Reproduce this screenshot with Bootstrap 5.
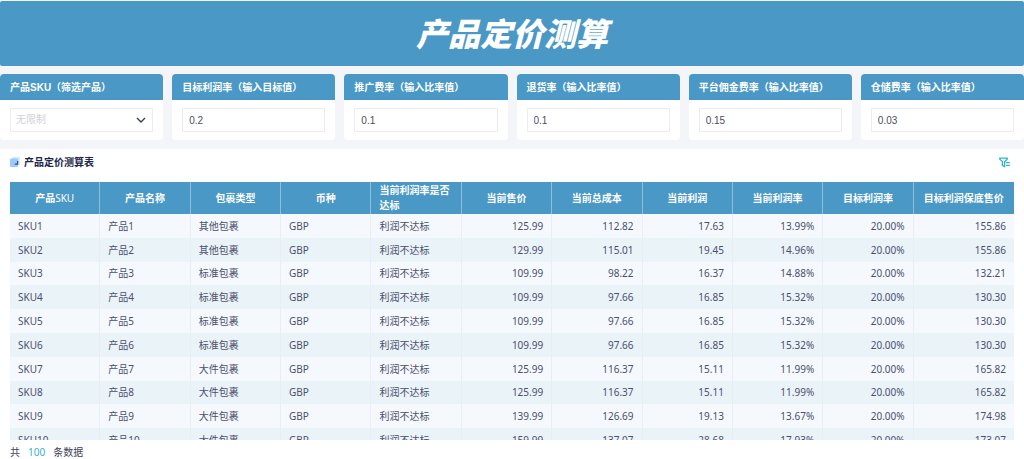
<!DOCTYPE html>
<html lang="zh-CN">
<head>
<meta charset="utf-8">
<meta name="viewport" content="width=device-width, initial-scale=1">
<title>产品定价测算</title>
<link href="https://cdn.jsdelivr.net/npm/bootstrap@5.3.0/dist/css/bootstrap.min.css" rel="stylesheet">
<style>
:root { --brand: #4a98c5; --ink: #4b4f6d; }
body { background: #f3f5f9; font-family: "Noto Sans", "Noto Sans CJK SC", sans-serif; font-size: 10px; line-height: 16px; color: var(--ink); }
.page-title { background: var(--brand); height: 65px; margin-top: 1px; padding-bottom: 4px; border-radius: 2px; }
.page-title h1 { font: italic 900 32px/40px "Noto Sans CJK SC", sans-serif; color: #fff; }
.filters { gap: 9px; padding: 8px 0 9px; }
.filter-card { flex: 1 1 0; min-width: 0; background: #fff; border-radius: 4px; overflow: hidden; font-family: "Liberation Sans", "Noto Sans CJK SC", sans-serif; }
.filter-card label { display: block; background: var(--brand); color: #fff; font-weight: 700; line-height: 24px; padding: 2px 10px 0; white-space: nowrap; }
.filter-body { padding: 8px 10px; }
.filter-body .form-control, .filter-body .form-select { height: 24px; min-height: 0; padding: 0 6px; font-size: 10px; line-height: 22px; border: 1px solid #ececef; border-radius: 1px; color: #4b4d5c; background-color: #fff; }
.filter-body .form-select { padding-left: 5px; color: #d0d1d6; background-image: url("data:image/svg+xml,%3Csvg xmlns='http://www.w3.org/2000/svg' viewBox='0 0 10 10'%3E%3Cpath d='M1 3l4 4 4-4' fill='none' stroke='%23374057' stroke-width='1.4'/%3E%3C/svg%3E"); background-size: 10px 10px; background-position: right 6px center; }
.report { min-height: 0; padding: 0 10px; }
.report-head { height: 33px; padding: 0 4px 7px 0; }
.report-head h2 { font-size: 10px; line-height: 16px; font-weight: 700; color: #20264a; }
.filter-btn { width: 12px; height: 12px; line-height: 0; }
.table-area { min-height: 0; overflow: hidden; }
.price-table { table-layout: fixed; height: 270px; border-collapse: separate; border-spacing: 0; }
.price-table .w-std { width: 9%; }
.price-table th, .price-table td { padding: 0 8px; vertical-align: middle; }
.price-table th { height: 32px; background: var(--brand); color: #fff; font-weight: 700; text-align: center; border-right: 1px solid #8dbfdb; line-height: 15px; }
.price-table th:last-child { white-space: nowrap; border-right: 0; }
.price-table td { border-right: 1px solid #e8eff4; white-space: nowrap; line-height: 20px; }
.price-table td:nth-child(n+6) { text-align: right; }
.price-table td:last-child { border-right: 0; }
.price-table tbody tr:nth-child(odd) { background: #f5f9fd; }
.price-table tbody tr:nth-child(even) { background: #eaf3f8; }
.report-foot { height: 19px; line-height: 24px; gap: 8px; color: #40435a; }
.total { color: #36b3c8; }
</style>
</head>
<body class="vh-100 d-flex flex-column overflow-hidden">
<header class="page-title flex-shrink-0 d-flex align-items-center justify-content-center"><h1 class="m-0">产品定价测算</h1></header>
<form class="filters d-flex flex-shrink-0">
  <div class="filter-card"><label for="sku">产品SKU（筛选产品）</label><div class="filter-body"><select class="form-select" id="sku"><option>无限制</option></select></div></div>
  <div class="filter-card"><label for="target">目标利润率（输入目标值）</label><div class="filter-body"><input class="form-control" id="target" value="0.2"></div></div>
  <div class="filter-card"><label for="promo">推广费率（输入比率值）</label><div class="filter-body"><input class="form-control" id="promo" value="0.1"></div></div>
  <div class="filter-card"><label for="returns">退货率（输入比率值）</label><div class="filter-body"><input class="form-control" id="returns" value="0.1"></div></div>
  <div class="filter-card"><label for="fee">平台佣金费率（输入比率值）</label><div class="filter-body"><input class="form-control" id="fee" value="0.15"></div></div>
  <div class="filter-card"><label for="storage">仓储费率（输入比率值）</label><div class="filter-body"><input class="form-control" id="storage" value="0.03"></div></div>
</form>
<main class="report bg-white flex-grow-1 d-flex flex-column">
  <div class="report-head flex-shrink-0 d-flex align-items-center justify-content-between">
    <div class="d-flex align-items-center gap-1">
      <svg width="10" height="10" viewBox="0 0 10 10" aria-hidden="true"><rect x="2" width="8" height="8" rx="1" fill="#d3e7ff"/><rect y="1.5" width="8" height="8.5" rx="1" fill="#9bcafd"/><path d="M7.6 4v3.2H4.8" fill="none" stroke="#3a517c" stroke-width="1.3"/></svg>
      <h2 class="m-0">产品定价测算表</h2>
    </div>
    <button type="button" class="filter-btn btn p-0 border-0" aria-label="筛选"><svg width="11" height="11" viewBox="0 0 11 11" fill="none" stroke="#2fb5c9" stroke-width="1.3"><path d="M.8 1.2h7.4v1L5.6 4.6v5L3.4 8.3V4.6L.8 2.2zM7 5.6h3.8M7 8.4h3.8"/></svg></button>
  </div>
  <div class="table-area flex-grow-1">
    <table class="price-table w-100">
      <colgroup><col class="w-std"><col class="w-std"><col class="w-std"><col class="w-std"><col class="w-std"><col class="w-std"><col class="w-std"><col class="w-std"><col class="w-std"><col class="w-std"><col></colgroup>
      <thead><tr><th>产品<span class="fw-normal">SKU</span></th><th>产品名称</th><th>包裹类型</th><th>币种</th><th class="text-start">当前利润率是否达标</th><th>当前售价</th><th>当前总成本</th><th>当前利润</th><th>当前利润率</th><th>目标利润率</th><th>目标利润保底售价</th></tr></thead>
      <tbody>
        <tr><td>SKU1</td><td>产品1</td><td>其他包裹</td><td>GBP</td><td>利润不达标</td><td>125.99</td><td>112.82</td><td>17.63</td><td>13.99%</td><td>20.00%</td><td>155.86</td></tr>
        <tr><td>SKU2</td><td>产品2</td><td>其他包裹</td><td>GBP</td><td>利润不达标</td><td>129.99</td><td>115.01</td><td>19.45</td><td>14.96%</td><td>20.00%</td><td>155.86</td></tr>
        <tr><td>SKU3</td><td>产品3</td><td>标准包裹</td><td>GBP</td><td>利润不达标</td><td>109.99</td><td>98.22</td><td>16.37</td><td>14.88%</td><td>20.00%</td><td>132.21</td></tr>
        <tr><td>SKU4</td><td>产品4</td><td>标准包裹</td><td>GBP</td><td>利润不达标</td><td>109.99</td><td>97.66</td><td>16.85</td><td>15.32%</td><td>20.00%</td><td>130.30</td></tr>
        <tr><td>SKU5</td><td>产品5</td><td>标准包裹</td><td>GBP</td><td>利润不达标</td><td>109.99</td><td>97.66</td><td>16.85</td><td>15.32%</td><td>20.00%</td><td>130.30</td></tr>
        <tr><td>SKU6</td><td>产品6</td><td>标准包裹</td><td>GBP</td><td>利润不达标</td><td>109.99</td><td>97.66</td><td>16.85</td><td>15.32%</td><td>20.00%</td><td>130.30</td></tr>
        <tr><td>SKU7</td><td>产品7</td><td>大件包裹</td><td>GBP</td><td>利润不达标</td><td>125.99</td><td>116.37</td><td>15.11</td><td>11.99%</td><td>20.00%</td><td>165.82</td></tr>
        <tr><td>SKU8</td><td>产品8</td><td>大件包裹</td><td>GBP</td><td>利润不达标</td><td>125.99</td><td>116.37</td><td>15.11</td><td>11.99%</td><td>20.00%</td><td>165.82</td></tr>
        <tr><td>SKU9</td><td>产品9</td><td>大件包裹</td><td>GBP</td><td>利润不达标</td><td>139.99</td><td>126.69</td><td>19.13</td><td>13.67%</td><td>20.00%</td><td>174.98</td></tr>
        <tr><td>SKU10</td><td>产品10</td><td>大件包裹</td><td>GBP</td><td>利润不达标</td><td>159.99</td><td>137.07</td><td>28.68</td><td>17.93%</td><td>20.00%</td><td>173.07</td></tr>
      </tbody>
    </table>
  </div>
  <footer class="report-foot flex-shrink-0 d-flex"><span>共</span><span class="total">100</span><span>条数据</span></footer>
</main>
<script src="https://cdn.jsdelivr.net/npm/bootstrap@5.3.0/dist/js/bootstrap.bundle.min.js"></script>
</body>
</html>
